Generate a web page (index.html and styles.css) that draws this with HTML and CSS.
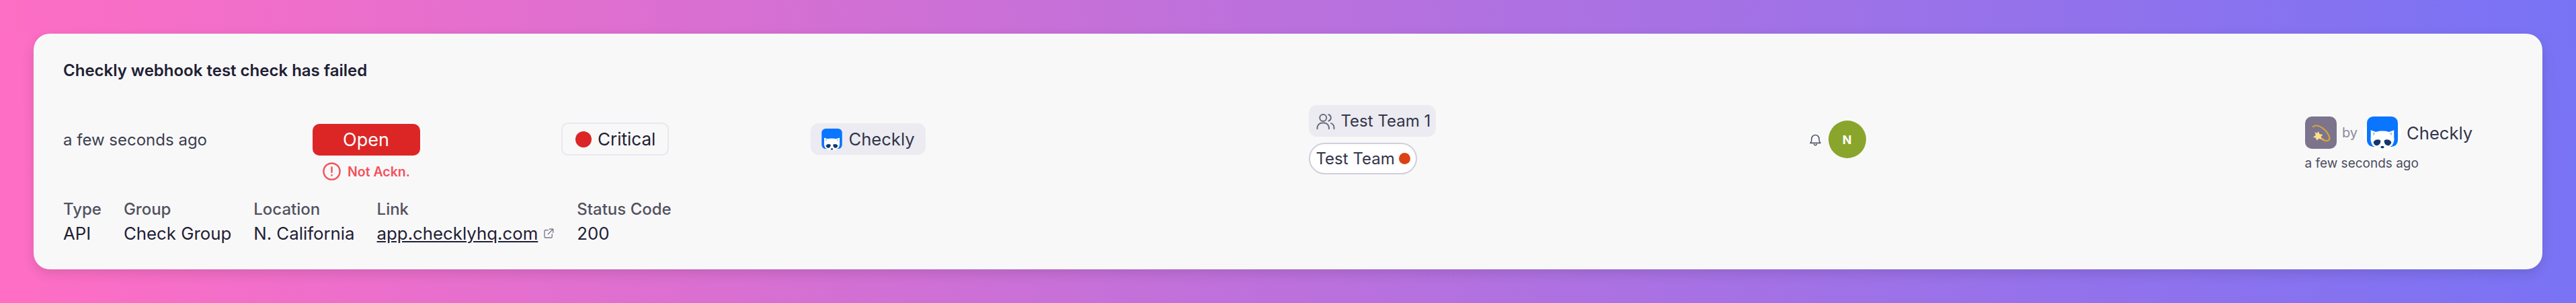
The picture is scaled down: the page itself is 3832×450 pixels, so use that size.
FILE: index.html
```html
<!DOCTYPE html>
<html lang="en">
<head>
    <meta charset="UTF-8">
    <title>Alert</title>
    <link rel="stylesheet" href="styles.css">
</head>
<body>
<div class="alert-card">
    <h2 class="alert-title">Checkly webhook test check has failed</h2>

    <div class="alert-row">
        <div class="time-cell">a few seconds ago</div>

        <div class="status-cell">
            <div class="status-btn">Open</div>
            <div class="ack-note">
                <svg class="ack-icon" viewBox="0 0 24 24" fill="none" stroke="currentColor" stroke-width="2" stroke-linecap="round">
                    <circle cx="12" cy="12" r="10"/>
                    <path d="M12 7v6M12 16.5v.5"/>
                </svg>
                Not Ackn.
            </div>
        </div>

        <div class="severity-cell">
            <div class="severity-badge"><span class="severity-dot"></span>Critical</div>
        </div>

        <div class="source-cell">
            <div class="soft-pill">
                <svg class="logo logo-small" viewBox="0 0 48 50"><use href="#raccoon"/></svg>
                Checkly
            </div>
        </div>

        <div class="team-cell">
            <div class="soft-pill team-pill">
                <svg class="team-icon" viewBox="0 0 24 24" fill="none" stroke="currentColor" stroke-width="1.6" stroke-linecap="round" stroke-linejoin="round">
                    <circle cx="9" cy="8" r="4"/>
                    <path d="M2 21v-1.5a6 6 0 0 1 6-5.5h2a6 6 0 0 1 6 5.5V21"/>
                    <path d="M15.500 4.200a4 4 0 0 1 0 7.600"/>
                    <path d="M22 21v-1.500a5.500 5.500 0 0 0-3.500-5"/>
                </svg>
                Test Team 1
            </div>
            <div class="oncall-pill">Test Team <span class="oncall-dot"></span></div>
        </div>

        <div class="assignee-cell">
            <svg class="bell-icon" viewBox="0 0 24 24" fill="none" stroke="currentColor" stroke-width="2" stroke-linecap="round" stroke-linejoin="round">
                <path d="M12 2.500a7 7 0 0 0-7 7c0 6-2.500 8-2.500 8h19s-2.500-2-2.500-8a7 7 0 0 0-7-7z"/>
                <path d="M9.500 20a2.600 2.600 0 0 0 5 0"/>
            </svg>
            <div class="avatar">N</div>
        </div>

        <div class="action-cell">
            <div class="action-line">
                <div class="emoji-tile">
                    <svg viewBox="0 0 48 48" class="emoji-icon">
                        <path d="M12 15C20 9 34 21 37 31C38 36 33 38 27 35" fill="none" stroke="#d6a23c" stroke-width="2.200" stroke-linecap="round"/>
                        <path d="M20 22l2 4 5 1-3 3 3 5-6-2-3 3-2-4-4-1 4-3-1-5 3 2z" fill="#f8e08c"/>
                        <path d="M24 31l7 4-6 0z" fill="#e0a93c"/>
                    </svg>
                </div>
                <span class="by-word">by</span>
                <div class="logo-ring"><svg class="logo" viewBox="0 0 48 50"><use href="#raccoon"/></svg></div>
                <span class="action-name">Checkly</span>
            </div>
            <div class="action-time">a few seconds ago</div>
        </div>
    </div>

    <div class="detail-row">
        <div class="detail"><div class="detail-label">Type</div><div>API</div></div>
        <div class="detail"><div class="detail-label">Group</div><div>Check Group</div></div>
        <div class="detail"><div class="detail-label">Location</div><div>N. California</div></div>
        <div class="detail">
            <div class="detail-label">Link</div>
            <div class="link-line">
                <a href="#" class="detail-link">app.checklyhq.com</a>
                <svg class="external-icon" viewBox="0 0 24 24" fill="none" stroke="currentColor" stroke-width="1.800" stroke-linecap="round" stroke-linejoin="round">
                    <path d="M11 5H6a2 2 0 0 0-2 2v11a2 2 0 0 0 2 2h11a2 2 0 0 0 2-2v-5"/>
                    <path d="M14 3h7v7M21 3l-10 10"/>
                </svg>
            </div>
        </div>
        <div class="detail"><div class="detail-label">Status Code</div><div>200</div></div>
    </div>
</div>

<!-- Checkly logo, used twice -->
<svg class="svg-defs" width="0" height="0">
    <symbol id="raccoon" viewBox="0 0 48 50">
        <rect width="48" height="47" rx="10" fill="#0a75ff"/>
        <path d="M6 21l8 3c6-2 14-2 20 0l8-3v11c1 5-1 10-3 13l-9 5H18l-9-5c-2-3-4-8-3-13z" fill="#fff"/>
        <path d="M9 24l4 2-3 4zM39 24l-4 2 3 4z" fill="#b9c4d4"/>
        <path d="M10 40c2-5 8-5 11-3 1 4-2 8-6 8-2 0-4-2-5-5zM38 40c-2-5-8-5-11-3-1 4 2 8 6 8 2 0 4-2 5-5z" fill="#12386b"/>
        <ellipse cx="24" cy="47.500" rx="2.800" ry="1.800" fill="#12386b"/>
    </symbol>
</svg>
</body>
</html>
```

FILE: styles.css
```css
body {
    margin: 0;
    height: 450px;
    padding: 50px;
    box-sizing: border-box;
    background: linear-gradient(85deg, #ff6ec4, #7873f5);
    font-family: Inter, "Liberation Sans", sans-serif;
    font-size: 24px;
    color: #1f2033;
    overflow: hidden;
}

/* Card */
.alert-card {
    height: 350px;
    box-sizing: border-box;
    padding: 38px 44px 0;
    background-color: #f8f8f9;
    border-radius: 24px;
    box-shadow: 0 6px 18px rgba(0, 0, 0, 0.12);
}

.alert-title {
    margin: 0;
    font-size: 24px;
    line-height: 34px;
    font-weight: 600;
}

/* Main row, ten equal columns */
.alert-row {
    display: grid;
    grid-template-columns: repeat(9, 370.5px) 1fr;
    margin-top: 62px;
    height: 109px;
}

.time-cell {
    height: 47px;
    display: flex;
    align-items: center;
    color: #3d3f50;
}

/* Status */
.status-btn {
    width: 160px;
    height: 47px;
    display: flex;
    align-items: center;
    justify-content: center;
    background-color: #dc2626;
    color: #fff;
    font-size: 27px;
    border-radius: 10px;
}

.ack-note {
    width: 160px;
    margin-top: 9px;
    display: flex;
    align-items: center;
    justify-content: center;
    gap: 9px;
    color: #f4515b;
    font-size: 19.500px;
    font-weight: 600;
}

.ack-icon {
    width: 29px;
    height: 29px;
}

/* Severity */
.severity-badge {
    display: inline-flex;
    align-items: center;
    gap: 9px;
    width: 160px;
    height: 49px;
    margin-top: -2px;
    box-sizing: border-box;
    padding-left: 19px;
    border: 2px solid #e8e8ee;
    border-radius: 10px;
    font-size: 26px;
}

.severity-dot {
    width: 24px;
    height: 24px;
    border-radius: 50%;
    background-color: #dc2626;
}

/* Pills */
.soft-pill {
    display: inline-flex;
    align-items: center;
    height: 47px;
    padding: 0 16px;
    gap: 10px;
    background-color: #ebebf1;
    border-radius: 12px;
    color: #33354a;
    font-size: 25.600px;
}

.source-cell,
.team-cell,
.assignee-cell {
    grid-column: span 2;
}

.source-cell {
    margin-top: -1px;
}

.logo {
    display: block;
    width: 46px;
    height: 48px;
}

.logo-small {
    width: 31px;
    height: 32px;
}

.team-cell {
    display: flex;
    flex-direction: column;
    align-items: flex-start;
    gap: 9px;
    margin-top: -28px;
}

.team-pill {
    padding: 0 8px 0 10px;
    gap: 8px;
    font-size: 24px;
}

.team-icon {
    width: 30px;
    height: 30px;
    color: #6b6d7c;
}

.oncall-pill {
    display: inline-flex;
    align-items: center;
    height: 47px;
    box-sizing: border-box;
    padding: 0 8px 0 9px;
    gap: 6px;
    border: 2px solid #cfcfdc;
    border-radius: 24px;
    background-color: #fff;
    color: #33354a;
}

.oncall-dot {
    width: 17px;
    height: 17px;
    border-radius: 50%;
    background-color: #dc4115;
}

/* Assignee */
.assignee-cell {
    display: flex;
    align-items: flex-start;
    gap: 10px;
    margin-top: -5px;
}

.bell-icon {
    width: 19px;
    height: 22px;
    margin: 18px 0 0 3px;
    color: #55576a;
}

.avatar {
    width: 56px;
    height: 56px;
    border-radius: 50%;
    display: flex;
    align-items: center;
    justify-content: center;
    background-color: #8aa52b;
    color: #fff;
    font-size: 18px;
    font-weight: 700;
}

/* Who did it */
.action-cell {
    margin-top: -15px;
}

.action-line {
    display: flex;
    align-items: center;
    gap: 8.500px;
}

.emoji-tile {
    width: 47px;
    height: 48px;
    border-radius: 10px;
    background-color: #7c748c;
}

.emoji-icon {
    display: block;
    width: 47px;
    height: 48px;
}

.by-word {
    font-size: 20px;
    color: #8a8b98;
}

.logo-ring {
    padding: 4px 5px;
    background-color: #fff;
    border-radius: 50%;
}

.action-name {
    color: #33354a;
    font-size: 25.600px;
}

.action-time {
    margin-top: 6px;
    font-size: 19px;
    color: #4c4e5e;
}

/* Details */
.detail-row {
    display: flex;
    gap: 33px;
}

.detail {
    line-height: 36px;
    font-size: 25.800px;
}

.detail-label {
    color: #52525f;
    font-size: 24px;
    font-weight: 500;
}

.link-line {
    display: flex;
    align-items: center;
    gap: 7px;
}

.detail-link {
    color: inherit;
}

.external-icon {
    width: 18px;
    height: 18px;
    color: #77788a;
}

.svg-defs {
    position: absolute;
}
```
